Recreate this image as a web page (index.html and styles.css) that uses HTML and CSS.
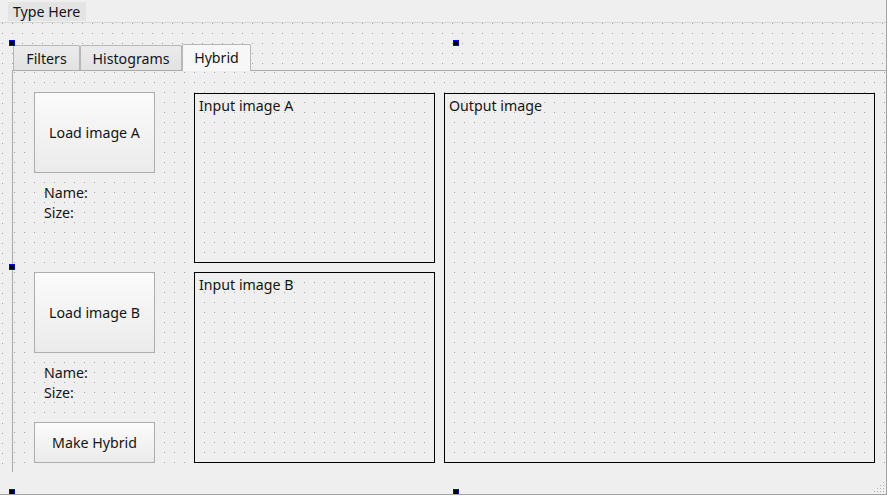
FILE: index.html
```html
<!DOCTYPE html>
<html>
<head>
<meta charset="utf-8">
<link rel="stylesheet" href="styles.css">
</head>
<body>
<div class="window">
  <div class="menubar"><span class="menu-item">Type Here</span></div>
  <div class="central">
    <div class="tabwidget">
      <div class="tabbar">
        <div class="tab tab-filters">Filters</div>
        <div class="tab tab-hist">Histograms</div>
        <div class="tab tab-hybrid active">Hybrid</div>
      </div>
      <div class="pane">
        <div class="page">
          <div class="col-left">
            <div class="btn btn-load">Load image A</div>
            <div class="info">
              <div class="info-line">Name:</div>
              <div class="info-line">Size:</div>
            </div>
            <div class="btn btn-load btn-b">Load image B</div>
            <div class="info">
              <div class="info-line">Name:</div>
              <div class="info-line">Size:</div>
            </div>
            <div class="btn btn-make">Make Hybrid</div>
          </div>
          <div class="col-mid">
            <div class="box box-a">Input image A</div>
            <div class="box box-b">Input image B</div>
          </div>
          <div class="box box-out">Output image</div>
        </div>
      </div>
    </div>
  </div>
  <div class="statusbar">
    <svg class="grip" width="10" height="10" viewBox="0 0 10 10">
      <rect x="9" y="0" width="1" height="1"/>
      <rect x="6" y="3" width="1" height="1"/><rect x="9" y="3" width="1" height="1"/>
      <rect x="3" y="6" width="1" height="1"/><rect x="6" y="6" width="1" height="1"/><rect x="9" y="6" width="1" height="1"/>
      <rect x="0" y="9" width="1" height="1"/><rect x="3" y="9" width="1" height="1"/><rect x="6" y="9" width="1" height="1"/><rect x="9" y="9" width="1" height="1"/>
    </svg>
  </div>
  <div class="handle h-tl"></div>
  <div class="handle h-tm"></div>
  <div class="handle h-ml"></div>
  <div class="handle h-bl"></div>
  <div class="handle h-bm"></div>
</div>
</body>
</html>
```

FILE: styles.css
```css
html, body {
  margin: 0;
  padding: 0;
  background: #ffffff;
}

body {
  font-family: "Noto Sans", "DejaVu Sans", sans-serif;
  font-size: 14.2px;
  color: #141414;
}

.window {
  position: relative;
  width: 886px;
  height: 494px;
  background: #efefef;
  border-right: 1px solid #a3a3a3;
  border-bottom: 1px solid #a3a3a3;
  overflow: hidden;
}

.menubar {
  height: 22px;
  border-bottom: 1px solid #d6d6d6;
  display: flex;
  align-items: flex-start;
  padding-left: 8px;
}

.menu-item {
  margin-top: 2px;
  height: 19px;
  line-height: 19px;
  padding: 0 5px;
  width: 68px;
  background: #e4e4e4;
  white-space: nowrap;
}

.central {
  height: 449px;
  overflow: hidden;
  padding: 21px 0 0 12px;
  box-sizing: border-box;
  background-color: #efefef;
  background-image:
    linear-gradient(to bottom, transparent 1px, #efefef 1px),
    linear-gradient(to right, #a4a4a4 1px, transparent 1px);
  background-size: 10px 10px, 10px 10px;
  background-position: 2px 0, 2px 0;
}

.tabwidget {
  width: 874px;
}

.tabbar {
  height: 26px;
  display: flex;
  align-items: flex-end;
  padding-left: 1px;
  position: relative;
  z-index: 2;
}

.tab {
  box-sizing: border-box;
  height: 25px;
  border: 1px solid #b7b7b7;
  border-bottom: none;
  border-radius: 2px 2px 0 0;
  background: linear-gradient(#ebebeb, #e2e2e2);
  display: flex;
  align-items: center;
  justify-content: center;
  white-space: nowrap;
}

.tab-filters { width: 67px; }
.tab-hist { width: 102px; }
.tab-hybrid { width: 69px; }

.tab.active {
  height: 27px;
  margin-bottom: -1px;
  background: #f7f7f7;
  padding-bottom: 2px;
}

.pane {
  border-top: 1px solid #acacac;
  border-left: 1px solid #acacac;
  padding: 1px 0 0 1px;
  height: 430px;
  background: #efefef;
}

.page {
  height: 100%;
  display: flex;
  align-items: flex-start;
  padding-left: 20px;
  background-color: #efefef;
  background-image:
    linear-gradient(to bottom, transparent 1px, #efefef 1px),
    linear-gradient(to right, #a4a4a4 1px, transparent 1px);
  background-size: 10px 10px, 10px 10px;
  background-position: 0 0, 0 0;
}

.col-left {
  width: 121px;
  margin-right: 39px;
  display: flex;
  flex-direction: column;
  padding-top: 20px;
}

.btn {
  box-sizing: border-box;
  border: 1px solid #adadad;
  border-radius: 2px;
  background: linear-gradient(#fbfbfb, #ebebeb);
  display: flex;
  align-items: center;
  justify-content: center;
  white-space: nowrap;
}

.btn-load { height: 81px; }
.btn-b { margin-top: 49px; }
.btn-make { height: 41px; margin-top: 19px; }

.info {
  margin-top: 10px;
  padding-left: 10px;
}

.info-line {
  height: 20px;
  line-height: 20px;
}

.col-mid {
  width: 241px;
  margin-right: 9px;
  margin-top: 21px;
  display: flex;
  flex-direction: column;
}

.box {
  box-sizing: border-box;
  border: 1px solid #000000;
  padding: 2px 0 0 4px;
  line-height: 20px;
  white-space: nowrap;
}

.box-a { height: 170px; }
.box-b { height: 191px; margin-top: 9px; }
.box-out { width: 431px; height: 370px; margin-top: 21px; }

.statusbar {
  height: 22px;
  position: relative;
}

.grip {
  position: absolute;
  right: 2px;
  bottom: 2px;
  fill: #b2b2b2;
}

.handle {
  position: absolute;
  width: 4px;
  height: 4px;
  background: #000000;
  border: 1px solid #0000ff;
  z-index: 5;
}

.h-tl { left: 9px; top: 40px; }
.h-tm { left: 453px; top: 40px; }
.h-ml { left: 9px; top: 264px; }
.h-bl { left: 9px; top: 489px; }
.h-bm { left: 453px; top: 489px; }
```
